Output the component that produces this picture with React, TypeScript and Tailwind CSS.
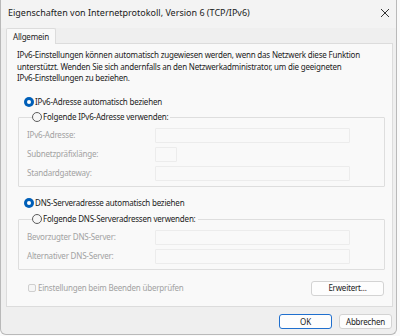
import React from "react";

const font = { fontFamily: '"Noto Sans", "Open Sans", sans-serif' };

function Radio({ checked }: { checked?: boolean }) {
  return checked ? (
    <span className="w-[10px] h-[10px] rounded-full bg-[#005fb8] flex items-center justify-center shrink-0">
      <span className="w-[4px] h-[4px] rounded-full bg-white" />
    </span>
  ) : (
    <span className="w-[10px] h-[10px] rounded-full border border-[#5c5c5c] bg-[#f6f6f6] shrink-0" />
  );
}

function Input({ w = "w-[195px]" }: { w?: string }) {
  return <div className={`${w} h-[15px] border border-[#ececec] bg-[#f9f9f9] rounded-[1px]`} />;
}

function Row({ label, small }: { label: string; small?: boolean }) {
  return (
    <div className="flex items-center h-[15px]">
      <span className="w-[128px] text-[#a2a2a2]">{label}</span>
      <Input w={small ? "w-[22px]" : "w-[195px]"} />
    </div>
  );
}

function Group({ legend, rows }: { legend: string; rows: { label: string; small?: boolean }[] }) {
  return (
    <fieldset className="border border-[#dedede] rounded-[1px] pl-[8px] pt-[4px] pb-[5px] flex flex-col gap-[4px]">
      <legend className="ml-[5px] pr-[2px] h-[13px] flex items-center gap-[1px] text-[#1b1b1b]">
        <Radio />
        <span>{legend}</span>
      </legend>
      {rows.map((r) => (
        <Row key={r.label} label={r.label} small={r.small} />
      ))}
    </fieldset>
  );
}

export default function App() {
  return (
    <div className="w-[400px] h-[336px] bg-[#fafafa]" style={font}>
      <div className="w-[397px] h-[335px] bg-[#efefef] border-l border-r border-b border-[#b9b9b9] rounded-b-[6px] flex flex-col text-[8px] tracking-[-0.2px] leading-[11.5px] text-[#1b1b1b]">
        {/* Title bar */}
        <div className="h-[28px] bg-[#f3f3f3] flex items-start justify-between pl-[7px] pr-[5px] pt-[7px]">
          <span className="text-[9px] leading-[12px] tracking-normal text-[#1b1b1b]">
            Eigenschaften von Internetprotokoll, Version 6 (TCP/IPv6)
          </span>
          <svg width="10" height="10" viewBox="0 0 10 10" className="mt-[1px] mr-[1px]">
            <path d="M1 1L9 9M9 1L1 9" stroke="#333" strokeWidth="1" />
          </svg>
        </div>
        {/* Tabs */}
        <div className="flex pl-[5px] bg-[#efefef]">
          <div className="h-[16px] px-[6px] bg-[#f9f9f9] border-t border-l border-r border-[#dcdcdc] rounded-t-[2px] flex items-center mb-[-1px] relative z-10">
            Allgemein
          </div>
        </div>
        {/* Panel */}
        <div className="mx-[5px] w-[387px] h-[264px] bg-[#f9f9f9] border border-[#dcdcdc] pl-[11px] pr-[7px] pt-[5px] flex flex-col">
          <div className="ml-[-1px] flex flex-col whitespace-nowrap">
            <span>IPv6-Einstellungen können automatisch zugewiesen werden, wenn das Netzwerk diese Funktion</span>
            <span>unterstützt. Wenden Sie sich andernfalls an den Netzwerkadministrator, um die geeigneten</span>
            <span>IPv6-Einstellungen zu beziehen.</span>
          </div>
          <div className="mt-[12px] ml-[6px] h-[13px] flex items-center gap-[1px]">
            <Radio checked />
            <span>IPv6-Adresse automatisch beziehen</span>
          </div>
          <div className="mt-[2px]">
            <Group
              legend="Folgende IPv6-Adresse verwenden:"
              rows={[
                { label: "IPv6-Adresse:" },
                { label: "Subnetzpräfixlänge:", small: true },
                { label: "Standardgateway:" },
              ]}
            />
          </div>
          <div className="mt-[10px] ml-[6px] h-[13px] flex items-center gap-[1px]">
            <Radio checked />
            <span>DNS-Serveradresse automatisch beziehen</span>
          </div>
          <div className="mt-[3px]">
            <Group
              legend="Folgende DNS-Serveradressen verwenden:"
              rows={[{ label: "Bevorzugter DNS-Server:" }, { label: "Alternativer DNS-Server:" }]}
            />
          </div>
          <div className="mt-[11px] flex items-center justify-between pl-[10px] pr-[1px]">
            <div className="flex items-center gap-[2px] text-[#a2a2a2]">
              <span className="w-[8px] h-[8px] border border-[#cfcfcf] rounded-[2px] bg-[#f6f6f6]" />
              <span>Einstellungen beim Beenden überprüfen</span>
            </div>
            <button className="w-[73px] h-[15px] bg-[#fdfdfd] border border-[#d3d3d3] rounded-[3px] flex items-center justify-center text-[#1b1b1b]">
              Erweitert...
            </button>
          </div>
        </div>
        {/* Footer */}
        <div className="flex justify-end gap-[7px] pr-[4px] pt-[7px]">
          <button className="w-[53px] h-[15px] bg-[#fdfdfd] border border-[#1f6fce] rounded-[3px] flex items-center justify-center">
            OK
          </button>
          <button className="w-[53px] h-[15px] bg-[#fdfdfd] border border-[#d3d3d3] rounded-[3px] flex items-center justify-center">
            Abbrechen
          </button>
        </div>
      </div>
    </div>
  );
}
